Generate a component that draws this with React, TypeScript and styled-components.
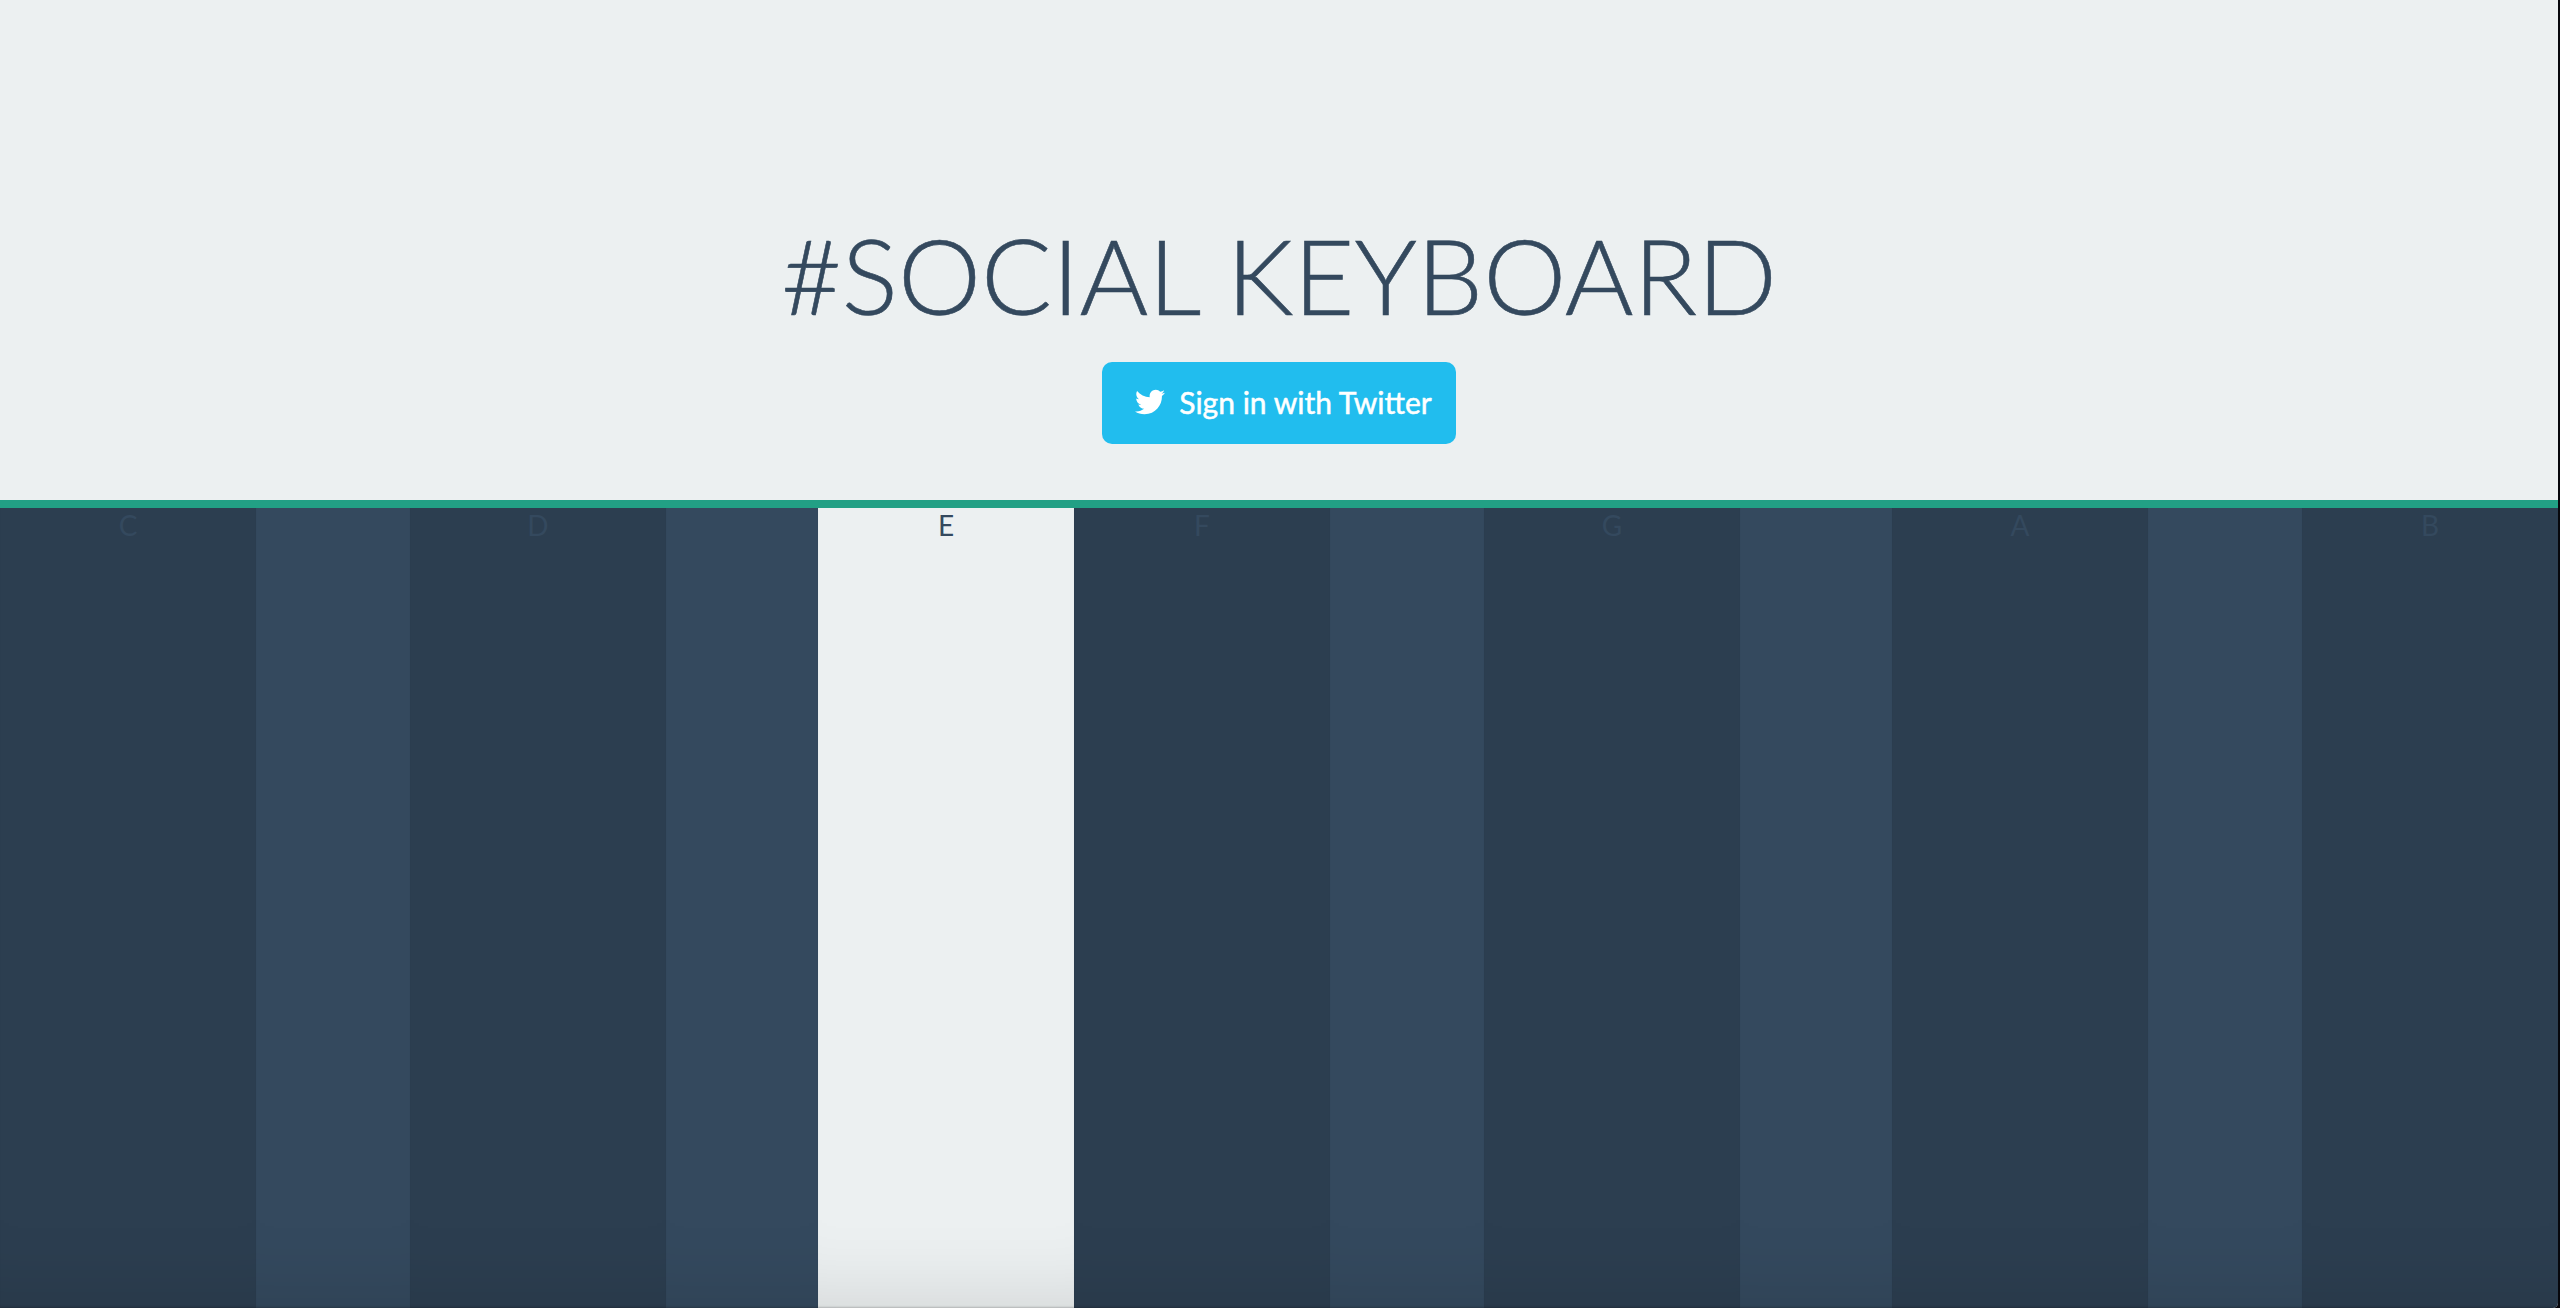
import styled, { createGlobalStyle } from "styled-components";
import { FaTwitter } from "react-icons/fa";

const GlobalStyle = createGlobalStyle`
  html, body {
    margin: 0;
    padding: 0;
    height: 100%;
    background: #07070c;
    overflow: hidden;
  }
`;

const Page = styled.div`
  width: 2558px;
  height: 1308px;
  display: flex;
  flex-direction: column;
  background-color: #ecf0f1;
  border-bottom-right-radius: 5px;
  overflow: hidden;
  font-family: Lato, "Liberation Sans", sans-serif;
`;

const Header = styled.header`
  height: 500px;
  box-sizing: border-box;
  padding-top: 209px;
  display: flex;
  flex-direction: column;
  align-items: center;
  flex-shrink: 0;
`;

const Title = styled.h1`
  margin: 0;
  height: 130px;
  font-size: 105px;
  line-height: 130px;
  font-weight: 300;
  color: #34495e;
  -webkit-text-stroke: 0.6px #34495e;
  white-space: nowrap;
`;

const SignIn = styled.a`
  margin-top: 23px;
  width: 354px;
  height: 82px;
  box-sizing: border-box;
  padding: 0 0 2px 9px;
  display: flex;
  align-items: center;
  justify-content: center;
  gap: 14px;
  background-color: #21bdee;
  border-radius: 10px;
  color: #fff;
  font-size: 30px;
  font-weight: 400;
  -webkit-text-stroke: 0.5px #fff;
  text-decoration: none;
  white-space: nowrap;

  svg {
    width: 30px;
    height: 30px;
  }
`;

const Keyboard = styled.div`
  flex: 1;
  display: flex;
  border-top: 8px solid #22a085;
`;

const Key = styled.div<{ $width: number; $sharp?: boolean; $active?: boolean }>`
  width: ${(p) => p.$width}px;
  flex-shrink: 0;
  box-sizing: border-box;
  text-align: center;
  font-size: 28px;
  line-height: 34px;
  background-color: ${(p) =>
    p.$active ? "#ecf0f1" : p.$sharp ? "#34495e" : "#2c3e50"};
  color: #34495e;
  box-shadow:
    inset 0 -2px 2px -1px rgba(0, 0, 0, 0.2),
    inset 0 -88px 88px -88px rgba(0, 0, 0, 0.14);
`;

const keys = [
  { label: "C", width: 256 },
  { sharp: true, width: 154 },
  { label: "D", width: 256 },
  { sharp: true, width: 152 },
  { label: "E", width: 256, active: true },
  { label: "F", width: 256 },
  { sharp: true, width: 154 },
  { label: "G", width: 256 },
  { sharp: true, width: 152 },
  { label: "A", width: 256 },
  { sharp: true, width: 154 },
  { label: "B", width: 256 },
];

export default function App() {
  return (
    <Page>
      <GlobalStyle />
      <Header>
        <Title>#SOCIAL KEYBOARD</Title>
        <SignIn href="#">
          <FaTwitter />
          Sign in with Twitter
        </SignIn>
      </Header>
      <Keyboard>
        {keys.map((k, i) => (
          <Key key={i} $width={k.width} $sharp={k.sharp} $active={k.active}>
            {k.label}
          </Key>
        ))}
      </Keyboard>
    </Page>
  );
}
